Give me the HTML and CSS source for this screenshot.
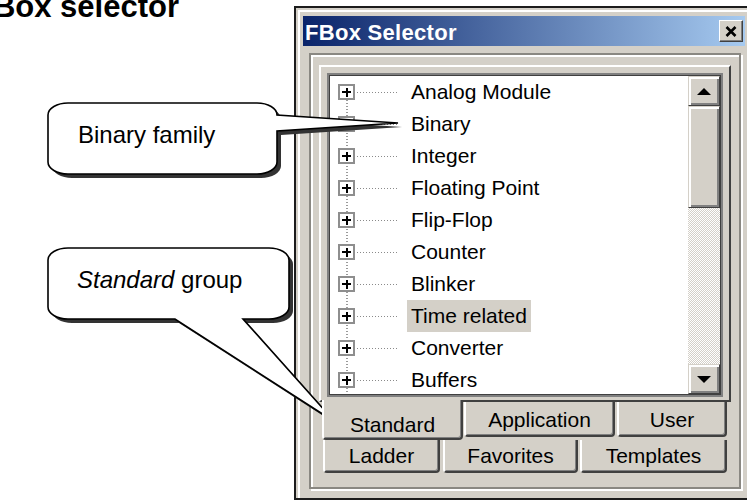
FILE: index.html
```html
<!DOCTYPE html>
<html lang="en">
	<head>
		<meta charset="UTF-8" />
		<meta name="viewport" content="width=device-width, initial-scale=1.0" />
		<title>FBox selector</title>
		<link rel="stylesheet" href="styles.css">
	</head>
	<body>
		<div class="page">
			<h1 class="heading">FBox selector</h1>

			<div class="window">
				<div class="titlebar">
					<span class="title">FBox Selector</span>
					<span class="close">
						<svg width="12" height="11" viewBox="0 0 12 11">
							<path d="M1.5 1 L10.5 10 M10.5 1 L1.5 10" stroke="#000" stroke-width="2.6" />
						</svg>
					</span>
				</div>

				<div class="frame">
					<div class="tabctl">
						<div class="tabpage">
							<div class="tree">
								<ul class="tree-list">
									<li class="node"><span class="expander"></span><span class="branch"></span><span class="label">Analog Module</span></li>
									<li class="node"><span class="expander"></span><span class="branch"></span><span class="label">Binary</span></li>
									<li class="node"><span class="expander"></span><span class="branch"></span><span class="label">Integer</span></li>
									<li class="node"><span class="expander"></span><span class="branch"></span><span class="label">Floating Point</span></li>
									<li class="node"><span class="expander"></span><span class="branch"></span><span class="label">Flip-Flop</span></li>
									<li class="node"><span class="expander"></span><span class="branch"></span><span class="label">Counter</span></li>
									<li class="node"><span class="expander"></span><span class="branch"></span><span class="label">Blinker</span></li>
									<li class="node"><span class="expander"></span><span class="branch"></span><span class="label selected">Time related</span></li>
									<li class="node"><span class="expander"></span><span class="branch"></span><span class="label">Converter</span></li>
									<li class="node"><span class="expander"></span><span class="branch"></span><span class="label">Buffers</span></li>
								</ul>
								<div class="scrollbar">
									<div class="sb-btn"><span class="arrow-up"></span></div>
									<div class="sb-thumb"></div>
									<div class="sb-track"></div>
									<div class="sb-btn"><span class="arrow-down"></span></div>
								</div>
							</div>
						</div>

						<div class="tab-row front">
							<div class="tab active t-standard">Standard</div>
							<div class="tab t-application">Application</div>
							<div class="tab t-user">User</div>
						</div>
						<div class="tab-row back">
							<div class="tab t-ladder">Ladder</div>
							<div class="tab t-favorites">Favorites</div>
							<div class="tab t-templates">Templates</div>
						</div>
					</div>
				</div>
			</div>

			<!-- callouts lie over the dialog -->
			<svg class="callouts" width="747" height="502" viewBox="0 0 747 502">
				<g transform="translate(4,4)" fill="#333">
					<path d="M68,103 H257 A20,12 0 0 1 277,115 L398,123 L277,131 V162 A20,12 0 0 1 257,174 H68 A20,12 0 0 1 48,162 V115 A20,12 0 0 1 68,103 Z" />
					<path d="M68,248 H269 A20,12 0 0 1 289,260 V307 A20,12 0 0 1 269,319 H243 L335,422 L175,319 H68 A20,12 0 0 1 48,307 V260 A20,12 0 0 1 68,248 Z" />
				</g>
				<path d="M68,103 H257 A20,12 0 0 1 277,115 L398,123 L277,131 V162 A20,12 0 0 1 257,174 H68 A20,12 0 0 1 48,162 V115 A20,12 0 0 1 68,103 Z" fill="#fff" stroke="#000" stroke-width="1.6" />
				<path d="M68,248 H269 A20,12 0 0 1 289,260 V307 A20,12 0 0 1 269,319 H243 L335,422 L175,319 H68 A20,12 0 0 1 48,307 V260 A20,12 0 0 1 68,248 Z" fill="#fff" stroke="#000" stroke-width="1.6" />
				<text class="callout-text" x="78" y="143">Binary family</text>
				<text class="callout-text" x="77" y="288"><tspan font-style="italic">Standard</tspan> group</text>
			</svg>
		</div>
	</body>
</html>
```

FILE: styles.css
```css
* {
	font-family: "Liberation Sans", Arial, sans-serif;
}
body {
	margin: 0;
	background: #fff;
}
.page {
	position: relative;
	width: 747px;
	height: 502px;
	overflow: hidden;
	display: flex;
	align-items: flex-start;
}
.heading {
	flex: 0 0 320px;
	margin: -9px 0 0 -26px;
	font-size: 31px;
	line-height: 31px;
	font-weight: bold;
	white-space: nowrap;
}

/* dialog */
.window {
	flex: none;
	box-sizing: border-box;
	width: 460px;
	height: 494px;
	margin-top: 6px;
	border: 2px solid #1c1c1c;
	border-right: 0;
	background: #d4d0c8;
	padding: 8px 0 0 7px;
	box-shadow: inset 2px 2px 0 #d4d0c8, inset 4px 4px 0 #fff;
}
.titlebar {
	box-sizing: border-box;
	width: 442px;
	height: 30px;
	padding: 0 2px 0 2px;
	display: flex;
	align-items: center;
	justify-content: space-between;
	background: linear-gradient(90deg, #0a246a, #a6caf0);
}
.title {
	color: #fff;
	font-weight: bold;
	font-size: 22px;
	letter-spacing: 0.3px;
	padding-top: 3px;
}
.close {
	box-sizing: border-box;
	width: 24px;
	height: 22px;
	display: flex;
	align-items: center;
	justify-content: center;
	background: #d4d0c8;
	border: 1px solid;
	border-color: #fff #404040 #404040 #fff;
	box-shadow: inset -1px -1px 0 #808080;
}

.frame {
	box-sizing: border-box;
	width: 432px;
	height: 436px;
	margin: 7px 0 0 6px;
	padding: 10px 0 0 8px;
	border: 2px solid #8a8882;
	box-shadow: inset 2px 2px 0 #fff, 2px 2px 0 #fff;
}
.tabctl {
	width: 412px;
}
.tabpage {
	box-sizing: border-box;
	height: 337px;
	padding: 6px 6px 3px 6px;
	border: 2px solid;
	border-color: #fff #404040 #404040 #fff;
}

/* tree */
.tree {
	box-sizing: border-box;
	height: 324px;
	display: flex;
	border: 2px solid #808080;
	box-shadow: inset 0 0 0 1px #404040;
	padding: 1px;
	background: #fff;
}
.tree-list {
	list-style: none;
	margin: 0;
	padding: 0;
	flex: 1;
	overflow: hidden;
	background: repeating-linear-gradient(180deg, #9a9a9a 0 1px, transparent 1px 3px) 16px 24px / 2px 100% no-repeat;
}
.node {
	display: flex;
	align-items: center;
	height: 32px;
}
.expander {
	position: relative;
	box-sizing: border-box;
	width: 17px;
	height: 16px;
	margin-left: 8px;
	border: 2px solid #8e8e8e;
	background: #fff;
}
.expander::before,
.expander::after {
	content: "";
	position: absolute;
	background: #000;
}
.expander::before {
	left: 2px;
	top: 5px;
	width: 9px;
	height: 2px;
}
.expander::after {
	left: 5.5px;
	top: 1.5px;
	width: 2px;
	height: 9px;
}
.branch {
	width: 41px;
	height: 1px;
	margin-left: 2px;
	background: repeating-linear-gradient(90deg, #8a8a8a 0 1px, transparent 1px 3px);
}
.label {
	margin-left: 9px;
	padding: 0 4px;
	line-height: 32px;
	font-size: 21px;
	color: #000;
	white-space: nowrap;
}
.label.selected {
	background: #d4d0c8;
}

/* scrollbar */
.scrollbar {
	width: 32px;
	display: flex;
	flex-direction: column;
}
.sb-btn,
.sb-thumb {
	box-sizing: border-box;
	background: #d4d0c8;
	border: 1px solid;
	border-color: #d4d0c8 #404040 #404040 #d4d0c8;
	box-shadow: inset 2px 2px 0 #fff, inset -2px -2px 0 #808080;
}
.sb-btn {
	height: 30px;
	display: flex;
	align-items: center;
	justify-content: center;
}
.sb-thumb {
	height: 102px;
}
.sb-track {
	flex: 1;
	background: repeating-conic-gradient(#d4d0c8 0 25%, #fff 0 50%) 0 0 / 2px 2px;
}
.arrow-up,
.arrow-down {
	width: 0;
	height: 0;
	border-left: 7px solid transparent;
	border-right: 7px solid transparent;
}
.arrow-up {
	border-bottom: 7px solid #000;
}
.arrow-down {
	border-top: 7px solid #000;
}

/* tabs at the bottom */
.tab-row {
	display: flex;
	align-items: flex-start;
}
.tab-row.front {
	height: 38px;
	position: relative;
	z-index: 1;
}
.tab-row.back {
	height: 33px;
}
.tab {
	box-sizing: border-box;
	background: #d4d0c8;
	border-left: 2px solid #fff;
	border-right: 2px solid #404040;
	border-bottom: 2px solid #404040;
	border-radius: 0 0 4px 4px;
	box-shadow: inset -1px -1px 0 #808080;
	text-align: center;
	font-size: 21px;
	line-height: 24px;
	color: #000;
}
.front .tab {
	height: 35px;
	padding-top: 6px;
}
.front .tab.active {
	height: 40px;
	margin-top: -2px;
	padding-top: 13px;
}
.back .tab {
	height: 33px;
	padding-top: 4px;
}
.t-standard {
	width: 141px;
	margin-left: 3px;
}
.t-application {
	width: 151px;
	margin-left: 1px;
}
.t-user {
	width: 110px;
	margin-left: 2px;
}
.t-ladder {
	width: 117px;
	margin-left: 4px;
}
.t-favorites {
	width: 135px;
	margin-left: 3px;
}
.t-templates {
	width: 147px;
	margin-left: 2px;
}

/* callouts */
.callouts {
	position: absolute;
	left: 0;
	top: 0;
	pointer-events: none;
}
.callout-text {
	font-size: 24px;
	fill: #000;
}
```
